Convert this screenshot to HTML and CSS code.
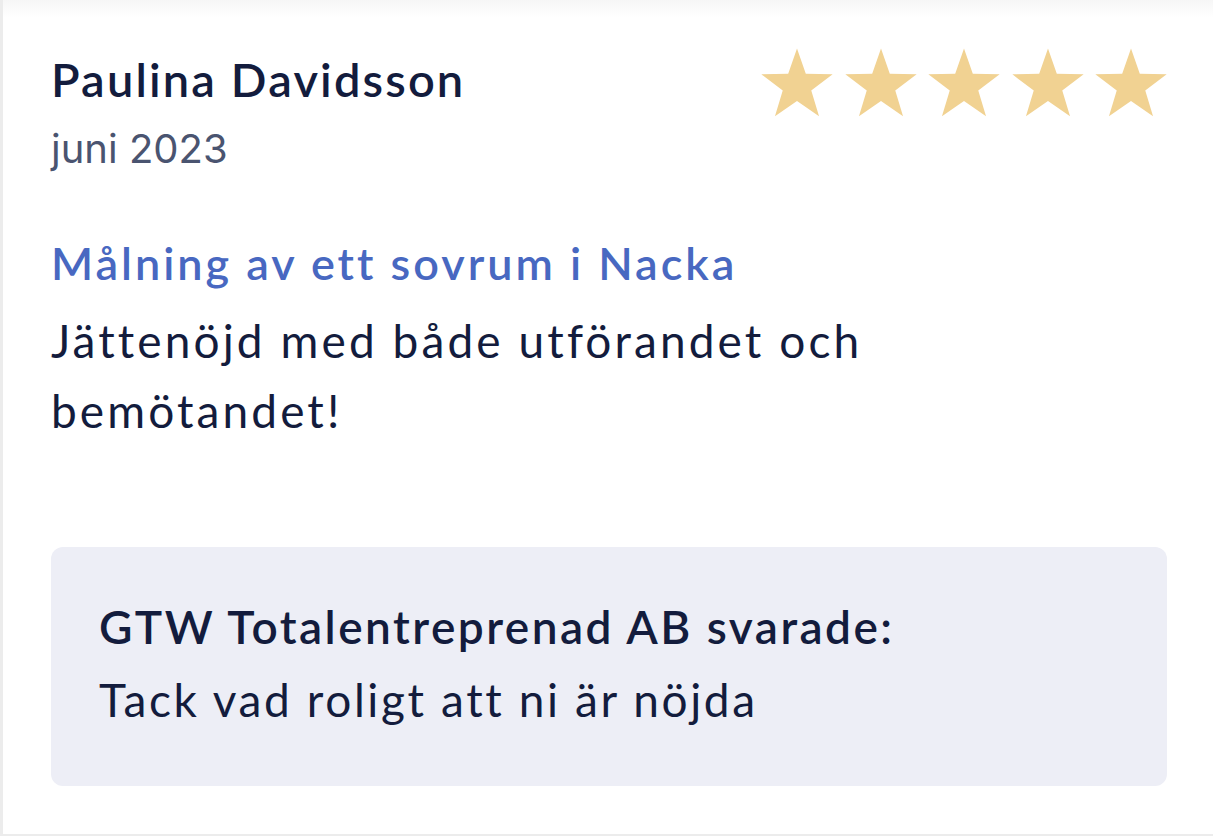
FILE: index.html
```html
<!DOCTYPE html>
<html lang="sv">
<head>
<meta charset="utf-8">
<title>Omdöme</title>
<link rel="stylesheet" href="styles.css">
</head>
<body>
<div class="card">
  <div class="header">
    <div class="who">
      <div class="name">Paulina Davidsson</div>
      <div class="date">juni 2023</div>
    </div>
    <div class="stars">
      <svg class="star" viewBox="-0.5 0 73 69"><polygon points="36,0 44.93,25.7 72.14,26.26 50.46,42.7 58.34,68.74 36,53.2 13.66,68.74 21.54,42.7 -0.14,26.26 27.07,25.7"/></svg>
      <svg class="star" viewBox="-0.5 0 73 69"><polygon points="36,0 44.93,25.7 72.14,26.26 50.46,42.7 58.34,68.74 36,53.2 13.66,68.74 21.54,42.7 -0.14,26.26 27.07,25.7"/></svg>
      <svg class="star" viewBox="-0.5 0 73 69"><polygon points="36,0 44.93,25.7 72.14,26.26 50.46,42.7 58.34,68.74 36,53.2 13.66,68.74 21.54,42.7 -0.14,26.26 27.07,25.7"/></svg>
      <svg class="star" viewBox="-0.5 0 73 69"><polygon points="36,0 44.93,25.7 72.14,26.26 50.46,42.7 58.34,68.74 36,53.2 13.66,68.74 21.54,42.7 -0.14,26.26 27.07,25.7"/></svg>
      <svg class="star" viewBox="-0.5 0 73 69"><polygon points="36,0 44.93,25.7 72.14,26.26 50.46,42.7 58.34,68.74 36,53.2 13.66,68.74 21.54,42.7 -0.14,26.26 27.07,25.7"/></svg>
    </div>
  </div>
  <div class="title">Målning av ett sovrum i Nacka</div>
  <div class="text">Jättenöjd med både utförandet och<br>bemötandet!</div>
  <div class="reply">
    <div class="reply-head">GTW Totalentreprenad AB svarade:</div>
    <div class="reply-text">Tack vad roligt att ni är nöjda</div>
  </div>
</div>
</body>
</html>
```

FILE: styles.css
```css
html, body {
  margin: 0;
  padding: 0;
}
body {
  background: #ececec;
  font-family: Lato, "Noto Sans", sans-serif;
  color: #131c3d;
}
.card {
  box-sizing: border-box;
  margin-left: 3px;
  height: 834px;
  background: #ffffff linear-gradient(#f6f6f6, #ffffff 18px);
  padding: 51px 46px 0 48px;
}
.header {
  display: flex;
  justify-content: space-between;
  align-items: flex-start;
}
.name {
  font-weight: 600;
  font-size: 47px;
  line-height: 56px;
  letter-spacing: 2.15px;
  color: #131c3d;
}
.date {
  font-family: Inter, sans-serif;
  font-size: 40px;
  line-height: 56px;
  margin-top: 14px;
  color: #4a5470;
}
.stars {
  display: flex;
  gap: 11.5px;
  margin-top: -3px;
}
.star {
  width: 72px;
  height: 69px;
  fill: #f1d292;
}
.title {
  margin-top: 56px;
  font-size: 45px;
  line-height: 60px;
  font-weight: 600;
  letter-spacing: 2.97px;
  color: #4868c1;
}
.text {
  margin-top: 13px;
  font-size: 46px;
  line-height: 70px;
  letter-spacing: 3.1px;
  color: #131c3d;
}
.reply {
  margin-top: 101px;
  height: 239px;
  box-sizing: border-box;
  background: #edeef6;
  border-radius: 12px;
  padding: 48px 48px 0;
}
.reply-head {
  font-weight: 600;
  font-size: 46px;
  line-height: 64px;
  letter-spacing: 2.45px;
}
.reply-text {
  margin-top: 9px;
  font-size: 46px;
  line-height: 64px;
  letter-spacing: 2.6px;
}
```
